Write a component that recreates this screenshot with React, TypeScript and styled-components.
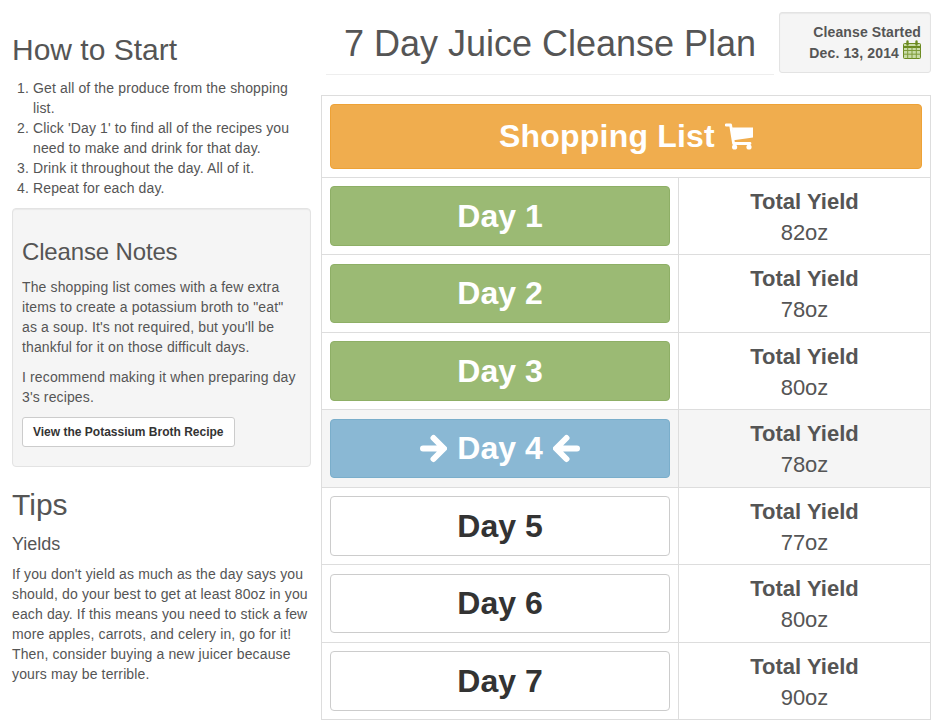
import styled, { createGlobalStyle } from "styled-components";

const GlobalStyle = createGlobalStyle`
  html, body {
    margin: 0;
    padding: 0;
    background: #fff;
  }
  body {
    font-family: "Liberation Sans", Arial, sans-serif;
    font-size: 14px;
    line-height: 20px;
    color: #555;
  }
`;

const Page = styled.div`
  display: grid;
  grid-template-columns: 299px 610px;
  column-gap: 10px;
  padding: 0 11px 0 12px;
  width: 942px;
  height: 727px;
  box-sizing: border-box;
  overflow: hidden;
`;

const Sidebar = styled.div`
  padding-top: 33px;
`;

const SideTitle = styled.h2`
  margin: 0 0 12px;
  font-size: 30px;
  font-weight: 400;
  line-height: 33px;
`;

const Steps = styled.ol`
  margin: 0 0 10px;
  padding-left: 21px;
  letter-spacing: 0.13px;
`;

const Notes = styled.div`
  background: #f5f5f5;
  border: 1px solid #e3e3e3;
  border-radius: 4px;
  box-shadow: inset 0 1px 1px rgba(0, 0, 0, 0.05);
  padding: 30px 9px 19px;
  margin-bottom: 21px;
`;

const NotesTitle = styled.h3`
  margin: 0 0 12px;
  font-size: 24px;
  font-weight: 400;
  line-height: 26px;
  letter-spacing: -0.15px;
`;

const Para = styled.p`
  margin: 0 0 10px;
  letter-spacing: 0.13px;
`;

const SmallButton = styled.button`
  display: block;
  background: #fff;
  border: 1px solid #ccc;
  border-radius: 3px;
  padding: 5px 10px;
  font-family: inherit;
  font-size: 12px;
  font-weight: 700;
  line-height: 18px;
  color: #333;
`;

const TipsTitle = styled(SideTitle)`
  margin-bottom: 13px;
`;

const TipsSub = styled.h4`
  margin: 0 0 10px;
  font-size: 18px;
  font-weight: 400;
  line-height: 20px;
`;

const Main = styled.div`
  display: flex;
  flex-direction: column;
`;

const Header = styled.div`
  display: flex;
  align-items: flex-start;
  gap: 5px;
  padding: 12px 0 0 5px;
  margin-bottom: 20px;
`;

const PlanTitle = styled.h1`
  flex: 1;
  margin: 0;
  height: 63px;
  box-sizing: border-box;
  border-bottom: 1px solid #eee;
  font-size: 36px;
  font-weight: 400;
  line-height: 64px;
  text-align: center;
`;

const StartedBox = styled.div`
  width: 152px;
  height: 61px;
  box-sizing: border-box;
  background: #f5f5f5;
  border: 1px solid #e3e3e3;
  border-radius: 3px;
  box-shadow: inset 0 1px 1px rgba(0, 0, 0, 0.05);
  padding: 9px 9px 0;
  font-size: 14px;
  font-weight: 700;
  line-height: 21px;
  letter-spacing: 0.13px;
`;

const StartedLine = styled.div`
  display: flex;
  justify-content: flex-end;
  gap: 4px;
  height: 21px;
`;

const CalendarIcon = styled.svg`
  width: 18px;
  height: 19px;
  margin-top: -3px;
`;

const PlanTable = styled.table`
  width: 610px;
  border-collapse: collapse;
  table-layout: fixed;
  border: 1px solid #ddd;
`;

const DayCol = styled.col`
  width: 357px;
`;

const Row = styled.tr<{ $active?: boolean }>`
  background: ${(p) => (p.$active ? "#f5f5f5" : "#fff")};
`;

const Cell = styled.td`
  border: 1px solid #ddd;
  padding: 8px;
  text-align: center;
  vertical-align: middle;
`;

const BigButton = styled.button<{ $bg: string; $line: string; $fg: string; $tall?: boolean }>`
  display: flex;
  align-items: center;
  justify-content: center;
  gap: 10px;
  width: 100%;
  height: ${(p) => (p.$tall ? "64.5px" : "59.5px")};
  background: ${(p) => p.$bg};
  border: 1px solid ${(p) => p.$line};
  border-radius: 4px;
  color: ${(p) => p.$fg};
  font-family: inherit;
  font-size: 32px;
  font-weight: 700;
  line-height: 1;
  padding: 0;
  letter-spacing: ${(p) => (p.$tall ? "0.2px" : "0")};
`;

const YieldTitle = styled.div`
  font-size: 22px;
  font-weight: 700;
  line-height: 31.5px;
`;

const YieldValue = styled.div`
  font-size: 22px;
  line-height: 27.5px;
  margin-top: 1.5px;
`;

const days = [
  { n: 1, total: "82oz", kind: "done" },
  { n: 2, total: "78oz", kind: "done" },
  { n: 3, total: "80oz", kind: "done" },
  { n: 4, total: "78oz", kind: "active" },
  { n: 5, total: "77oz", kind: "todo" },
  { n: 6, total: "80oz", kind: "todo" },
  { n: 7, total: "90oz", kind: "todo" },
];

const palette: Record<string, { bg: string; line: string; fg: string }> = {
  done: { bg: "#9bba74", line: "#8eaf66", fg: "#fff" },
  active: { bg: "#8ab8d4", line: "#7aaecb", fg: "#fff" },
  todo: { bg: "#fff", line: "#ccc", fg: "#333" },
};

function Calendar() {
  return (
    <CalendarIcon viewBox="0 0 18 19">
      <rect x="0.5" y="3.5" width="17" height="15" rx="1" fill="#c9dca6" stroke="#6b8a20" />
      <path d="M0.5 7H17.5" stroke="#6b8a20" strokeWidth="2" />
      <path d="M4.5 1.5V4.5M13.5 1.5V4.5" stroke="#6b8a20" strokeWidth="2.4" strokeLinecap="round" />
      <path d="M4.7 7.5V18.5M9 7.5V18.5M13.3 7.5V18.5M0.5 10.5H17.5M0.5 14.2H17.5" stroke="#7f9c3a" strokeWidth="1" />
    </CalendarIcon>
  );
}

function Cart() {
  return (
    <svg width="28" height="27" viewBox="0 0 28 27" fill="currentColor">
      <path d="M1 2H5.6L8.6 20.5H25" fill="none" stroke="currentColor" strokeWidth="2.8" strokeLinecap="round" strokeLinejoin="round" />
      <path d="M7 4.5H28V14.5L8.6 17.2Z" />
      <circle cx="9.6" cy="24" r="2.6" />
      <circle cx="24" cy="24" r="2.6" />
    </svg>
  );
}

function Arrow({ flip }: { flip?: boolean }) {
  return (
    <svg width="27" height="29" viewBox="0 0 27 29" style={flip ? { transform: "scaleX(-1)" } : undefined}>
      <path
        d="M3 14.5H23M13.5 4L24 14.5L13.5 25"
        fill="none"
        stroke="currentColor"
        strokeWidth="6"
        strokeLinecap="round"
        strokeLinejoin="round"
      />
    </svg>
  );
}

export default function App() {
  return (
    <>
      <GlobalStyle />
      <Page>
        <Sidebar>
          <SideTitle>How to Start</SideTitle>
          <Steps>
            <li>Get all of the produce from the shopping list.</li>
            <li>Click 'Day 1' to find all of the recipes you need to make and drink for that day.</li>
            <li>Drink it throughout the day. All of it.</li>
            <li>Repeat for each day.</li>
          </Steps>
          <Notes>
            <NotesTitle>Cleanse Notes</NotesTitle>
            <Para>
              The shopping list comes with a few extra items to create a potassium broth to "eat" as a soup. It's not
              required, but you'll be thankful for it on those difficult days.
            </Para>
            <Para>I recommend making it when preparing day 3's recipes.</Para>
            <SmallButton>View the Potassium Broth Recipe</SmallButton>
          </Notes>
          <TipsTitle>Tips</TipsTitle>
          <TipsSub>Yields</TipsSub>
          <Para>
            If you don't yield as much as the day says you should, do your best to get at least 80oz in you each day. If
            this means you need to stick a few more apples, carrots, and celery in, go for it! Then, consider buying a
            new juicer because yours may be terrible.
          </Para>
        </Sidebar>
        <Main>
          <Header>
            <PlanTitle>7 Day Juice Cleanse Plan</PlanTitle>
            <StartedBox>
              <StartedLine>Cleanse Started</StartedLine>
              <StartedLine>
                Dec. 13, 2014
                <Calendar />
              </StartedLine>
            </StartedBox>
          </Header>
          <PlanTable>
            <colgroup>
              <DayCol />
              <col />
            </colgroup>
            <tbody>
              <Row>
                <Cell colSpan={2}>
                  <BigButton $tall $bg="#f0ad4e" $line="#eea236" $fg="#fff">
                    Shopping List <Cart />
                  </BigButton>
                </Cell>
              </Row>
              {days.map((d) => {
                const colors = palette[d.kind];
                return (
                  <Row key={d.n} $active={d.kind === "active"}>
                    <Cell>
                      <BigButton $bg={colors.bg} $line={colors.line} $fg={colors.fg}>
                        {d.kind === "active" && <Arrow />}
                        Day {d.n}
                        {d.kind === "active" && <Arrow flip />}
                      </BigButton>
                    </Cell>
                    <Cell>
                      <YieldTitle>Total Yield</YieldTitle>
                      <YieldValue>{d.total}</YieldValue>
                    </Cell>
                  </Row>
                );
              })}
            </tbody>
          </PlanTable>
        </Main>
      </Page>
    </>
  );
}
